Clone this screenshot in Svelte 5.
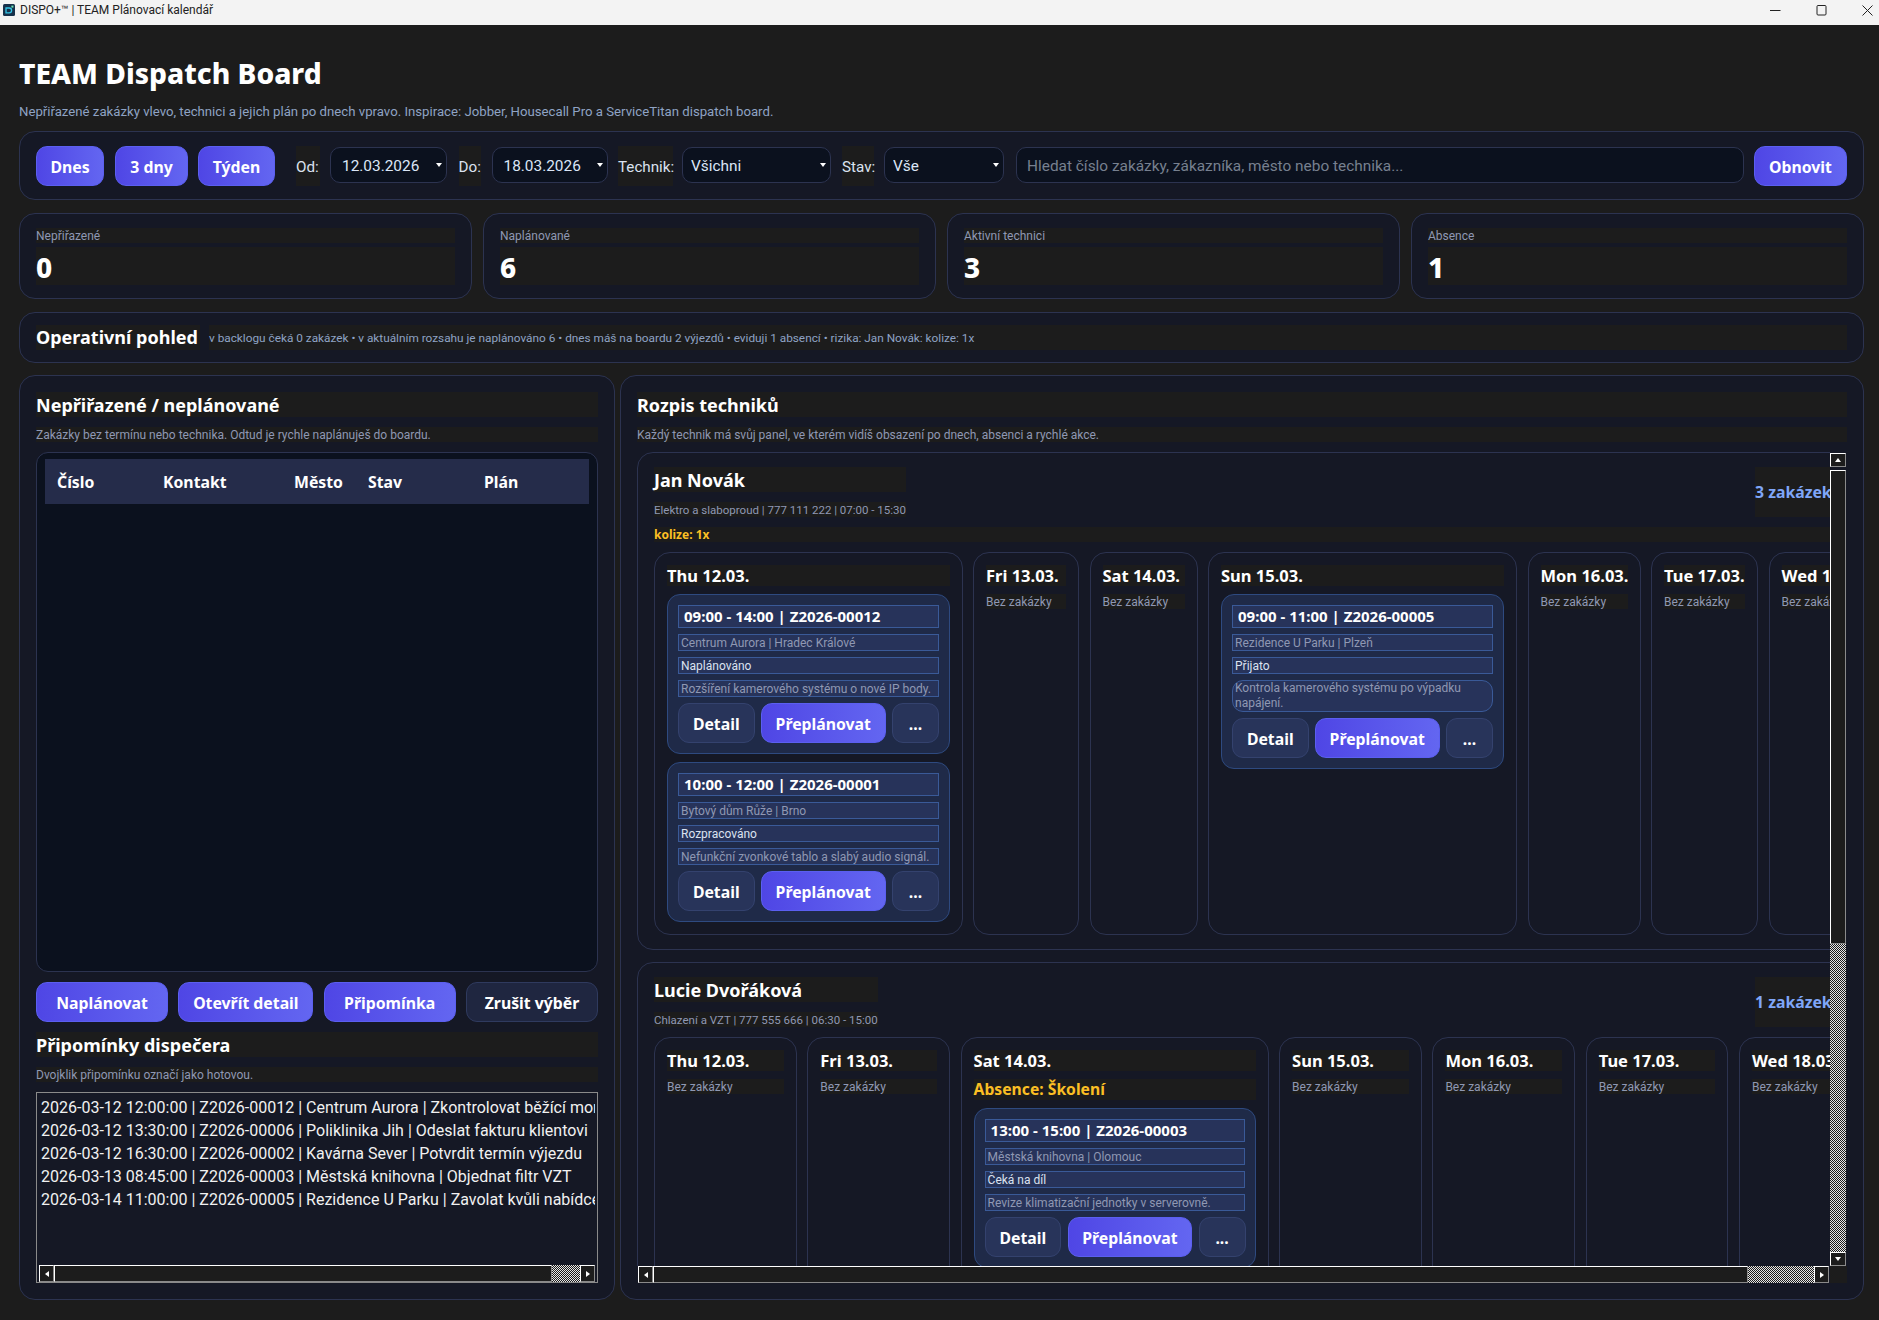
<script>
  const viewButtons = ['Dnes', '3 dny', 'Týden'];

  const stats = [
    { label: 'Nepřiřazené', value: 0 },
    { label: 'Naplánované', value: 6 },
    { label: 'Aktivní technici', value: 3 },
    { label: 'Absence', value: 1 }
  ];

  const reminders = [
    '2026-03-12 12:00:00 | Z2026-00012 | Centrum Aurora | Zkontrolovat běžící montáž',
    '2026-03-12 13:30:00 | Z2026-00006 | Poliklinika Jih | Odeslat fakturu klientovi',
    '2026-03-12 16:30:00 | Z2026-00002 | Kavárna Sever | Potvrdit termín výjezdu',
    '2026-03-13 08:45:00 | Z2026-00003 | Městská knihovna | Objednat filtr VZT',
    '2026-03-14 11:00:00 | Z2026-00005 | Rezidence U Parku | Zavolat kvůli nabídce'
  ];

  const technicians = [
    {
      name: 'Jan Novák',
      info: 'Elektro a slaboproud | 777 111 222 | 07:00 - 15:30',
      risk: 'kolize: 1x',
      count: '3 zakázek',
      days: [
        {
          title: 'Thu 12.03.',
          width: 308.5,
          jobs: [
            {
              head: '09:00 - 14:00 | Z2026-00012',
              place: 'Centrum Aurora | Hradec Králové',
              status: 'Naplánováno',
              note: 'Rozšíření kamerového systému o nové IP body.'
            },
            {
              head: '10:00 - 12:00 | Z2026-00001',
              place: 'Bytový dům Růže | Brno',
              status: 'Rozpracováno',
              note: 'Nefunkční zvonkové tablo a slabý audio signál.'
            }
          ]
        },
        { title: 'Fri 13.03.', width: 106 },
        { title: 'Sat 14.03.', width: 108 },
        {
          title: 'Sun 15.03.',
          width: 309,
          jobs: [
            {
              head: '09:00 - 11:00 | Z2026-00005',
              place: 'Rezidence U Parku | Plzeň',
              status: 'Přijato',
              note: 'Kontrola kamerového systému po výpadku napájení.',
              wrap: true
            }
          ]
        },
        { title: 'Mon 16.03.', width: 113 },
        { title: 'Tue 17.03.', width: 107 },
        { title: 'Wed 18.03.', width: 112 }
      ]
    },
    {
      name: 'Lucie Dvořáková',
      info: 'Chlazení a VZT | 777 555 666 | 06:30 - 15:00',
      count: '1 zakázek',
      days: [
        { title: 'Thu 12.03.', width: 142.8 },
        { title: 'Fri 13.03.', width: 142.8 },
        {
          title: 'Sat 14.03.',
          width: 308,
          absence: 'Absence: Školení',
          jobs: [
            {
              head: '13:00 - 15:00 | Z2026-00003',
              place: 'Městská knihovna | Olomouc',
              status: 'Čeká na díl',
              note: 'Revize klimatizační jednotky v serverovně.'
            }
          ]
        },
        { title: 'Sun 15.03.', width: 142.8 },
        { title: 'Mon 16.03.', width: 142.8 },
        { title: 'Tue 17.03.', width: 142.8 },
        { title: 'Wed 18.03.', width: 142.8 }
      ]
    }
  ];
</script>

{#snippet hbar(thumb, trough)}
  <div class="hbar">
    <div class="arrow"><i class="tri left"></i></div>
    <div class="thumb" style="width: {thumb}px"></div>
    <div class="dither" style="width: {trough}px"></div>
    <div class="arrow"><i class="tri right"></i></div>
  </div>
{/snippet}

<div class="window">
  <header class="titlebar">
    <svg class="appicon" viewBox="0 0 12 12" width="12" height="12">
      <rect width="12" height="12" rx="1.5" fill="#16304a" />
      <path d="M3 4h3.2a2.2 2.2 0 0 1 0 4.8H3z" fill="none" stroke="#35c6e8" stroke-width="1.3" />
      <rect x="8.4" y="1.6" width="2" height="2" fill="#6ee7b7" />
    </svg>
    <span class="wintitle">DISPO+™ | TEAM Plánovací kalendář</span>
    <div class="controls">
      <svg viewBox="0 0 11 11" width="11" height="11"><path d="M0 5.5h10.5" stroke="#222" fill="none" /></svg>
      <svg viewBox="0 0 11 11" width="11" height="11"><rect x="1" y=".5" width="9" height="9.5" rx="1" stroke="#222" fill="none" /></svg>
      <svg viewBox="0 0 11 11" width="11" height="11"><path d="M.5.5l10 10M10.5.5l-10 10" stroke="#222" fill="none" /></svg>
    </div>
  </header>

  <main class="page">
    <h1>TEAM Dispatch Board</h1>
    <p class="lead">Nepřiřazené zakázky vlevo, technici a jejich plán po dnech vpravo. Inspirace: Jobber, Housecall Pro a ServiceTitan dispatch board.</p>

    <section class="toolbar card">
      {#each viewButtons as label, i}
        <button class="btn primary view{i}">{label}</button>
      {/each}
      <span class="lbl l-od">Od:</span>
      <div class="field date1"><input value="12.03.2026" /><i class="caret"></i></div>
      <span class="lbl l-do">Do:</span>
      <div class="field date2"><input value="18.03.2026" /><i class="caret"></i></div>
      <span class="lbl l-tech">Technik:</span>
      <div class="field sel1"><input class="narrow" value="Všichni" /><i class="caret"></i></div>
      <span class="lbl l-stav">Stav:</span>
      <div class="field sel2"><input class="narrow" value="Vše" /><i class="caret"></i></div>
      <input class="search" placeholder="Hledat číslo zakázky, zákazníka, město nebo technika..." />
      <button class="btn primary refresh">Obnovit</button>
    </section>

    <section class="stats">
      {#each stats as s}
        <div class="stat card">
          <div class="stat-label">{s.label}</div>
          <div class="stat-value">{s.value}</div>
        </div>
      {/each}
    </section>

    <section class="overview card">
      <strong>Operativní pohled</strong>
      <span>v backlogu čeká 0 zakázek • v aktuálním rozsahu je naplánováno 6 • dnes máš na boardu 2 výjezdů • eviduji 1 absencí • rizika: Jan Novák: kolize: 1x</span>
    </section>

    <div class="columns">
      <section class="panel left card">
        <h2>Nepřiřazené / neplánované</h2>
        <p class="hint">Zakázky bez termínu nebo technika. Odtud je rychle naplánuješ do boardu.</p>
        <div class="backlog">
          <table>
            <thead>
              <tr>
                <th class="c1">Číslo</th>
                <th class="c2">Kontakt</th>
                <th class="c3">Město</th>
                <th class="c4">Stav</th>
                <th>Plán</th>
              </tr>
            </thead>
          </table>
        </div>
        <div class="actions">
          <button class="btn primary a1">Naplánovat</button>
          <button class="btn primary a2">Otevřít detail</button>
          <button class="btn primary a3">Připomínka</button>
          <button class="btn ghost a4">Zrušit výběr</button>
        </div>
        <h2>Připomínky dispečera</h2>
        <p class="hint">Dvojklik připomínku označí jako hotovou.</p>
        <div class="listbox">
          <ul>
            {#each reminders as r}
              <li>{r}</li>
            {/each}
          </ul>
          {@render hbar(498, 28)}
        </div>
      </section>

      <section class="panel right card">
        <h2>Rozpis techniků</h2>
        <p class="hint">Každý technik má svůj panel, ve kterém vidíš obsazení po dnech, absenci a rychlé akce.</p>
        <div class="board">
          <div class="viewport">
            {#each technicians as t}
              <article class="tech">
                <div class="tech-head">
                  <div class="tech-id">
                    <h3>{t.name}</h3>
                    <p>{t.info}</p>
                  </div>
                  <div class="count">{t.count}</div>
                </div>
                {#if t.risk}
                  <div class="risk">{t.risk}</div>
                {/if}
                <div class="days">
                  {#each t.days as d}
                    <div class="day" style="width: {d.width}px">
                      <div class="day-title">{d.title}</div>
                      {#if d.absence}
                        <div class="absence">{d.absence}</div>
                      {/if}
                      {#if d.jobs}
                        {#each d.jobs as job}
                          <div class="job">
                            <div class="job-head">{job.head}</div>
                            <div class="line dim">{job.place}</div>
                            <div class="line">{job.status}</div>
                            <div class="line dim" class:wrap={job.wrap}>{job.note}</div>
                            <div class="job-actions">
                              <button class="btn soft b1">Detail</button>
                              <button class="btn primary b2">Přeplánovat</button>
                              <button class="btn soft b3">...</button>
                            </div>
                          </div>
                        {/each}
                      {:else}
                        <div class="empty">Bez zakázky</div>
                      {/if}
                    </div>
                  {/each}
                </div>
              </article>
            {/each}
          </div>
          <div class="vbar">
            <div class="arrow"><i class="tri up"></i></div>
            <div class="thumb"></div>
            <div class="dither"></div>
            <div class="arrow"><i class="tri down"></i></div>
          </div>
          <div class="hwrap">
            {@render hbar(1095, 66)}
          </div>
          <div class="corner"></div>
        </div>
      </section>
    </div>
  </main>
</div>

<style>
  :global(body) {
    margin: 0;
    background: #1c1c1c;
    font-family: Roboto, "Noto Sans", sans-serif;
    color: #fff;
  }

  .window {
    width: 1879px;
    height: 1320px;
    overflow: hidden;
    background: #1c1c1c;
  }

  .titlebar {
    height: 25px;
    box-sizing: border-box;
    display: flex;
    align-items: center;
    background: #f3f3f3;
    color: #222;
    font-size: 12px;
    padding: 0 6px 5px 3px;
  }

  .appicon {
    margin-right: 5px;
  }

  .controls {
    margin-left: auto;
    display: flex;
    gap: 35px;
  }

  .page {
    padding: 29px 15px 0 19px;
  }

  h1 {
    margin: 0;
    font-family: "Noto Sans", sans-serif;
    font-size: 28.2px;
    line-height: 38px;
    font-weight: 800;
  }

  .lead {
    margin: 12px 0 11px;
    font-size: 13.2px;
    line-height: 15px;
    padding-bottom: 1px;
    color: #8fa3c4;
  }

  .card {
    background: #151825;
    border: 1px solid #2c3350;
    box-sizing: border-box;
    border-radius: 16px;
  }

  .btn {
    font-family: "Noto Sans", sans-serif;
    font-weight: 700;
    font-size: 15.8px;
    color: #fff;
    height: 40px;
    border-radius: 11px;
    padding: 1px 0 0;
    border: 1px solid transparent;
    box-sizing: border-box;
    flex: none;
  }

  .primary {
    background: linear-gradient(90deg, #4f46e5, #6366f1);
    border-color: #5b5ff0;
  }

  .ghost {
    background: #1f2640;
    border-color: #2f3a5e;
  }

  .soft {
    background: #28345a;
    border-color: #34426e;
  }

  .toolbar {
    height: 69px;
    padding: 14px 16px;
    display: flex;
    align-items: flex-start;
  }

  .view0 { width: 68px; }
  .view1 { width: 73px; margin-left: 11px; }
  .view2 { width: 77px; margin-left: 10px; }
  .refresh { width: 93px; margin-left: 10px; }

  .lbl {
    flex: none;
    height: 40px;
    line-height: 43px;
    font-size: 15.2px;
    color: #dbe2f0;
    background: #1c1c1c;
    white-space: nowrap;
  }

  .l-od { width: 24px; margin-left: 21px; }
  .l-do { width: 22px; margin-left: 11.5px; }
  .l-tech { width: 55px; margin-left: 10.5px; }
  .l-stav { width: 32px; margin-left: 11px; }

  .field {
    position: relative;
    flex: none;
    height: 36px;
    margin-top: 1px;
    box-sizing: border-box;
  }

  .date1 { width: 117px; margin-left: 10px; }
  .date2 { width: 116px; margin-left: 11px; }
  .sel1 { width: 149px; margin-left: 9px; }
  .sel2 { width: 120px; margin-left: 10px; }

  .field input,
  .search {
    width: 100%;
    height: 36px;
    box-sizing: border-box;
    background: #0b111e;
    border: 1px solid #2c3350;
    border-radius: 10px;
    color: #dbe6f7;
    font-family: inherit;
    font-size: 15.4px;
    padding: 2px 0 0 11px;
    outline: none;
  }

  .field input.narrow {
    padding-left: 8px;
  }

  .caret {
    position: absolute;
    right: 5px;
    top: 16px;
    width: 0;
    height: 0;
    border-left: 3.5px solid transparent;
    border-right: 3.5px solid transparent;
    border-top: 4px solid #fff;
  }

  .search {
    flex: none;
    width: 728px;
    margin: 1px 0 0 12px;
    padding-left: 10px;
  }

  .search::placeholder {
    color: #77808f;
    opacity: 1;
  }

  .stats {
    margin-top: 13px;
    display: grid;
    grid-template-columns: repeat(4, 1fr);
    gap: 11px;
  }

  .stat {
    height: 86px;
    padding: 14px 16px;
  }

  .stat-label {
    height: 15px;
    line-height: 17px;
    font-size: 12px;
    color: #8f98b3;
    background: #1c1c1c;
  }

  .stat-value {
    margin-top: 4px;
    height: 38px;
    line-height: 40px;
    font-family: "Noto Sans", sans-serif;
    font-size: 28px;
    font-weight: 800;
    background: #1c1c1c;
  }

  .overview {
    margin-top: 13px;
    height: 51px;
    padding: 12px 16px;
    display: flex;
    gap: 9px;
    line-height: 25px;
  }

  .overview strong {
    font-family: "Noto Sans", sans-serif;
    font-size: 18px;
    background: #1c1c1c;
    width: 164px;
    flex: none;
    white-space: nowrap;
  }

  .overview span {
    flex: 1;
    font-size: 11.8px;
    line-height: 27px;
    color: #8fa3c4;
    background: #1c1c1c;
  }

  .columns {
    margin-top: 12px;
    height: 925px;
    display: grid;
    grid-template-columns: 596px 1fr;
    gap: 5px;
  }

  .panel {
    padding: 16px;
    display: flex;
    flex-direction: column;
    gap: 10px;
    min-width: 0;
  }

  h2 {
    margin: 0;
    height: 25px;
    line-height: 27px;
    font-family: "Noto Sans", sans-serif;
    font-size: 18px;
    font-weight: 700;
    background: #1c1c1c;
  }

  .hint {
    margin: 0;
    height: 15px;
    line-height: 17px;
    font-size: 12px;
    color: #8f98b3;
    background: #1c1c1c;
  }

  .backlog {
    height: 520px;
    box-sizing: border-box;
    padding: 6px 8px;
    background: #0b111e;
    border: 1px solid #2c3350;
    border-radius: 12px;
  }

  table {
    width: 100%;
    border-collapse: collapse;
    table-layout: fixed;
  }

  th {
    height: 45px;
    padding: 0 0 0 12px;
    text-align: left;
    background: #252c4a;
    font-family: "Noto Sans", sans-serif;
    font-size: 15.8px;
    font-weight: 700;
  }

  .c1 { width: 106px; }
  .c2 { width: 131px; padding-left: 0; }
  .c3 { width: 74px; padding-left: 0; }
  .c4 { width: 116px; padding-left: 0; }
  th:last-child { padding-left: 0; }

  .actions {
    display: flex;
    justify-content: space-between;
  }

  .a1 { width: 132px; }
  .a2 { width: 135px; }
  .a3 { width: 132px; }
  .a4 { width: 132px; }

  .listbox {
    height: 191px;
    box-sizing: border-box;
    border: 1px solid #8a8a8a;
    display: flex;
    flex-direction: column;
    padding: 0 2px 0 2px;
  }

  ul {
    flex: 1;
    margin: 0;
    padding: 3px 0 0 2px;
    list-style: none;
    overflow: hidden;
    font-size: 16px;
    line-height: 23px;
    color: #f1f1f1;
    white-space: nowrap;
  }

  .hbar {
    height: 17px;
    display: flex;
    flex: none;
  }

  .hwrap {
    padding-left: 1px;
  }

  .arrow {
    width: 15px;
    flex: none;
    box-sizing: border-box;
    border: 1px solid;
    border-color: #fff #8a8a8a #8a8a8a #fff;
    display: flex;
    align-items: center;
    justify-content: center;
    background: #1c1c1c;
  }

  .thumb {
    box-sizing: border-box;
    background: #1c1c1c;
    border: 1px solid;
    border-color: #fff #8a8a8a #8a8a8a #fff;
  }

  .dither {
    background: repeating-conic-gradient(#e6e6e6 0 25%, #1c1c1c 0 50%) 0 0 / 2px 2px;
  }

  .tri {
    width: 0;
    height: 0;
    border: 3px solid transparent;
  }

  .tri.left { border-right: 4px solid #fff; border-left: 0; }
  .tri.right { border-left: 4px solid #fff; border-right: 0; }
  .tri.up { border-bottom: 4px solid #fff; border-top: 0; }
  .tri.down { border-top: 4px solid #fff; border-bottom: 0; }

  .board {
    height: 831px;
    display: grid;
    grid-template-columns: 1193px 17px;
    grid-template-rows: 814px 17px;
  }

  .viewport {
    overflow: hidden;
    display: flex;
    flex-direction: column;
    gap: 12px;
  }

  .tech {
    width: 1224px;
    flex: none;
    box-sizing: border-box;
    padding: 14px 16px;
    background: #151825;
    border: 1px solid #2c3350;
    border-radius: 16px;
    display: flex;
    flex-direction: column;
    gap: 10px;
  }

  .tech-head {
    display: flex;
    justify-content: space-between;
    height: 50px;
  }

  h3 {
    margin: 0 0 10px;
    height: 25px;
    line-height: 27px;
    font-family: "Noto Sans", sans-serif;
    font-size: 18px;
    font-weight: 700;
    background: #1c1c1c;
  }

  .tech-id p {
    margin: 0;
    height: 15px;
    line-height: 17px;
    font-size: 11.5px;
    color: #8f98b3;
    background: #1c1c1c;
    white-space: nowrap;
  }

  .count {
    width: 89px;
    line-height: 51px;
    font-family: "Noto Sans", sans-serif;
    font-size: 15.8px;
    font-weight: 700;
    color: #7fa6f8;
    background: #1c1c1c;
    white-space: nowrap;
  }

  .risk {
    height: 15px;
    line-height: 15px;
    font-family: "Noto Sans", sans-serif;
    font-size: 12px;
    font-weight: 700;
    color: #fbbf24;
    background: #1c1c1c;
  }

  .days {
    display: flex;
    gap: 10.5px;
    align-items: stretch;
    min-height: 382px;
  }

  .day {
    flex: none;
    box-sizing: border-box;
    padding: 12px 12px;
    border: 1px solid #2c3350;
    border-radius: 16px;
    display: flex;
    flex-direction: column;
    gap: 8px;
  }

  .day-title {
    height: 21px;
    line-height: 21px;
    font-family: "Noto Sans", sans-serif;
    font-size: 16.5px;
    font-weight: 700;
    background: #1c1c1c;
    white-space: nowrap;
  }

  .empty {
    height: 15px;
    line-height: 17px;
    font-size: 12px;
    color: #8f98b3;
    background: #1c1c1c;
    white-space: nowrap;
  }

  .absence {
    height: 21px;
    line-height: 21px;
    font-family: "Noto Sans", sans-serif;
    font-size: 15.7px;
    font-weight: 700;
    color: #fbbf24;
    background: #1c1c1c;
  }

  .job {
    box-sizing: border-box;
    padding: 10px;
    background: #1f2a48;
    border: 1px solid #2e4a80;
    border-radius: 13px;
    display: flex;
    flex-direction: column;
    gap: 6px;
  }

  .job-head {
    height: 23px;
    box-sizing: border-box;
    line-height: 21px;
    padding-left: 5px;
    font-family: "Noto Sans", sans-serif;
    font-size: 15px;
    font-weight: 700;
    background: #27335a;
    border: 1px solid #3a5a98;
    white-space: nowrap;
  }

  .line {
    height: 17px;
    box-sizing: border-box;
    line-height: 17px;
    padding-left: 2px;
    font-size: 12px;
    color: #dbe2f0;
    background: #27335a;
    border: 1px solid #3a5a98;
    white-space: nowrap;
  }

  .line.dim {
    color: #8f98b3;
  }

  .line.wrap {
    height: 32px;
    line-height: 15px;
    white-space: normal;
    border-radius: 11px;
  }

  .job-actions {
    display: flex;
    gap: 6.5px;
  }

  .b1 { width: 76.5px; }
  .b2 { width: 124.5px; }
  .b3 { width: 47px; }

  .vbar {
    display: flex;
    flex-direction: column;
    padding-top: 1px;
  }

  .vbar .arrow {
    width: 16px;
    height: 14px;
  }

  .vbar .thumb {
    width: 16px;
    height: 474px;
    margin-top: 3px;
  }

  .vbar .dither {
    flex: 1;
    width: 16px;
  }

  .corner {
    background: #1c1c1c;
  }
</style>
